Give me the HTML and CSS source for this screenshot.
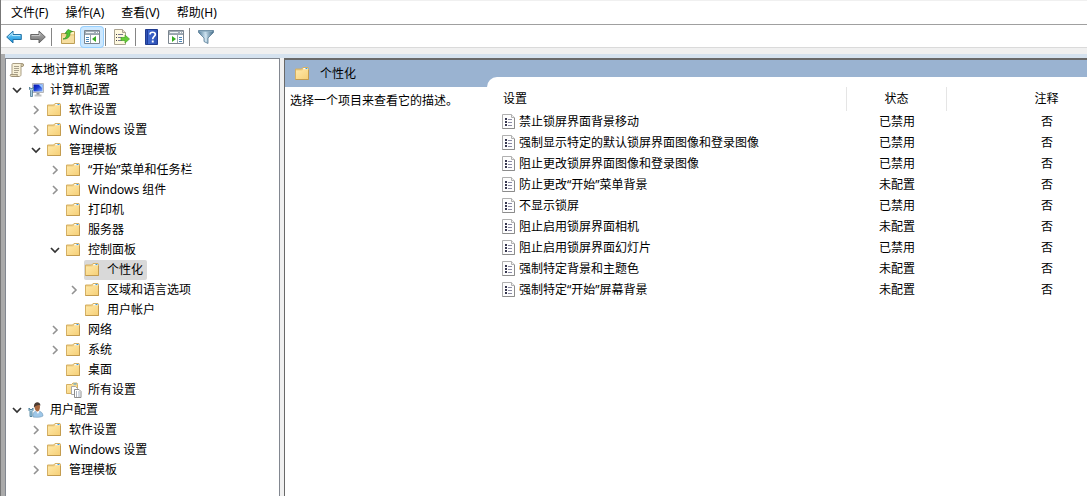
FILE: index.html
```html
<!DOCTYPE html>
<html lang="zh-CN">
<head>
<meta charset="utf-8">
<title>本地组策略编辑器</title>
<link rel="stylesheet" href="styles.css">
</head>
<body>
<svg class="sprite" aria-hidden="true">
  <defs>
    <linearGradient id="gFolder" x1="0" y1="0" x2="1" y2="1"><stop offset="0" stop-color="#ffe9aa"/><stop offset="1" stop-color="#f6d078"/></linearGradient>
    <linearGradient id="gBlue" x1="0" y1="0" x2="0" y2="1"><stop offset="0" stop-color="#8ad8fa"/><stop offset="1" stop-color="#0c8edb"/></linearGradient>
    <linearGradient id="gGray" x1="0" y1="0" x2="0" y2="1"><stop offset="0" stop-color="#b5b5b5"/><stop offset="1" stop-color="#707070"/></linearGradient>
    <linearGradient id="gHelp" x1="0" y1="0" x2="1" y2="0"><stop offset="0" stop-color="#2645a5"/><stop offset=".2" stop-color="#3f68cf"/><stop offset="1" stop-color="#2c4fb4"/></linearGradient>
    <linearGradient id="gFunnel" x1="0" y1="0" x2="1" y2="0"><stop offset="0" stop-color="#507a98"/><stop offset=".45" stop-color="#c9e0ee"/><stop offset="1" stop-color="#426a86"/></linearGradient>
    <linearGradient id="gScreen" x1="0" y1="0" x2="1" y2="1"><stop offset="0" stop-color="#0717a8"/><stop offset=".45" stop-color="#1636d4"/><stop offset="1" stop-color="#84b8ff"/></linearGradient>
  </defs>
  <symbol id="folder" viewBox="0 0 16 16">
    <path d="M.5 13.500v-10.500h6l1.500-1.500h5l.5 1.500v10.500z" fill="#efcd80" stroke="#d5b064"/>
    <path d="M8.500 2h4.500v1.500H8z" fill="#fff"/><path d="M10.500 2h2v1h-2z" fill="#3b9de0"/>
    <path d="M1 4.500h6l1.500-1H13V13H1z" fill="url(#gFolder)"/>
    <path d="M.5 13.500h13V4" fill="none" stroke="#c39c50"/>
  </symbol>
  <symbol id="folder-docs" viewBox="0 0 16 16">
    <path d="M.5 11.500v-9h5l1.500-1.500h4l.5 1.500v9z" fill="url(#gFolder)" stroke="#d5b064"/>
    <path d="M7.500 1.500h3v1h-3z" fill="#3b9de0"/>
    <path d="M5.500 4.500h4l2 2v6h-6z" fill="#fff" stroke="#a8a8a8"/>
    <path d="M8.500 7.500h4.500l2 2v6H8.500z" fill="#fff" stroke="#8d8d8d"/>
    <path d="M10 10h1M10 12h1M10 14h1" stroke="#33415f" stroke-width=".8"/><path d="M12 10h2M12 12h2M12 14h2" stroke="#8799b5" stroke-width=".8"/>
  </symbol>
  <symbol id="scroll" viewBox="0 0 16 16">
    <path d="M4 1.500h9.500c1.500 0 1.500 3 0 3H12v8c0 1.500-1 2-2 2H3V3c0-1 .3-1.500 1-1.500z" fill="#f8f1d8" stroke="#a99d83"/>
    <path d="M12 4.500V2.800c0-1 1.200-1.300 2-.5s.3 2.200-.7 2.200z" fill="#ded2b0" stroke="#92866d" stroke-width=".7"/>
    <path d="M1.500 12.500h7c-1 1 0 2 1 2H2.500c-1.500 0-1.500-1.500-1-2z" fill="#e8dcbb" stroke="#92866d" stroke-width=".8"/>
    <path d="M5 4.500h5M5 6.500h5M5 8.500h5M5 10.500h4" stroke="#a8a08b"/>
  </symbol>
  <symbol id="computer" viewBox="0 0 16 16">
    <path d="M4.500 1.500h11v9h-11z" fill="#e4e6e8" stroke="#b4b6b9"/>
    <path d="M5.500 2.500h9v7h-9z" fill="url(#gScreen)"/><path d="M10.500 2.500h4v4z" fill="#9acbff"/>
    <path d="M8.500 11h3v2h-3z" fill="#929aa2"/><path d="M6.500 13.500h7" stroke="#c0c2c4" stroke-width="2"/>
    <path d="M1.500 5v2.500l1 1v6h2v-6l1-1V5L4.500 6.500h-2z" fill="#a9cde2" stroke="#4d7892" stroke-width=".8"/>
  </symbol>
  <symbol id="user" viewBox="0 0 16 16">
    <path d="M5 15c-.5-4 1-6 4.500-6s5.500 2 5.500 5c-2 1.500-7 1.500-10 1z" fill="#9ec7e8" stroke="#7198b9" stroke-width=".6"/>
    <path d="M8 9l2 3 1.500-3z" fill="#fff"/>
    <path d="M6.500 4.500c0-4 5.500-4 5.500 0 0 2.500-.8 5-2.500 5s-3-2.500-3-5z" fill="#a8683f"/>
    <path d="M6 5.500c-1-6 6-7 6.500-2L10.500 3 7.500 4z" fill="#4a3b32"/>
    <path d="M1 6v2.500l1 1v5h2v-5l1-1V6L4 7.500H2z" fill="#a9cde2" stroke="#39718f" stroke-width=".8"/>
  </symbol>
  <symbol id="policy" viewBox="0 0 14 16">
    <path d="M.5.500h9l3 3v11H.5z" fill="#fdfdfd" stroke="#b0b0b0"/><path d="M9.500.500v3h3" fill="#eee" stroke="#b0b0b0"/>
    <path d="M.5 14.500h12V4" fill="none" stroke="#8c8c8c"/>
    <path d="M3 4h2v2H3zM3 7h2v2H3zM3 10h2v2H3z" fill="#37374f"/>
    <path d="M6 5.500h4M6 8.500h4M6 11.500h4" stroke="#8b8ba5"/>
  </symbol>
  <symbol id="chev-right" viewBox="0 0 16 16"><path d="M6 4l4 4-4 4" fill="none" stroke="#929292" stroke-width="1.600"/></symbol>
  <symbol id="chev-down" viewBox="0 0 16 16"><path d="M4 6l4 4 4-4" fill="none" stroke="#333" stroke-width="1.700"/></symbol>
  <symbol id="back" viewBox="0 0 16 16"><path d="M.7 8L7 2v3.500h8.300v5H7V14z" fill="url(#gBlue)" stroke="#2473a6"/><path d="M2.500 7.700L6.200 4.200v2.300h8" fill="none" stroke="#b4e8fd"/></symbol>
  <symbol id="forward" viewBox="0 0 16 16"><path d="M15.300 8L9 2v3.500H.7v5H9V14z" fill="url(#gGray)" stroke="#686868"/><path d="M1.700 6.500h8V4.200" fill="none" stroke="#c9c9c9"/></symbol>
  <symbol id="up" viewBox="0 0 16 16">
    <path d="M1.500 4.500h5l1-2h7v12h-13z" fill="#efd58d" stroke="#bd9f56"/><path d="M10 3h4v2h-4z" fill="#fff3c5"/><path d="M2 7h12v7H2z" fill="#f6dea0"/>
    <path d="M3 10c2.500-.5 4-2.500 4-6L5 4.500 8 .5l4.500 2L10 3.500C10.500 7.500 7.500 10.500 3 10z" fill="#4fc631" stroke="#348d24" stroke-width=".7"/>
  </symbol>
  <symbol id="tree-pane" viewBox="0 0 16 16">
    <path d="M.5 1.500h15v13H.5z" fill="#fff" stroke="#7b858f"/><path d="M1 2h14v3H1z" fill="#a1acb6"/>
    <path d="M2 3.500h8" stroke="#eef2f5"/><path d="M12 3.500h1M14 3.500h1" stroke="#fff"/>
    <path d="M1 5.500h14M6.500 6v8" stroke="#98a3ad"/><path d="M2 8.500h3M2 10.500h3M2 12.500h3" stroke="#4a86b9"/><path d="M12 7v6L8 10z" fill="#35aa20"/>
  </symbol>
  <symbol id="action-pane" viewBox="0 0 16 16">
    <path d="M.5 1.500h15v13H.5z" fill="#fff" stroke="#7b858f"/><path d="M1 2h14v3H1z" fill="#a1acb6"/>
    <path d="M2 3.500h8" stroke="#eef2f5"/><path d="M12 3.500h1M14 3.500h1" stroke="#fff"/>
    <path d="M1 5.500h14M9.500 6v8" stroke="#98a3ad"/><path d="M11 8.500h3M11 10.500h3M11 12.500h3" stroke="#4a86b9"/><path d="M4 7v6l4-3z" fill="#35aa20"/>
  </symbol>
  <symbol id="export" viewBox="0 0 16 16">
    <path d="M.5.500h8l3 3v12H.5z" fill="#fff9df" stroke="#aaa391"/><path d="M8.500.500v3h3" fill="#e9e0c5" stroke="#aaa391"/>
    <path d="M2 5.500h1M2 8.500h1M2 11.500h1" stroke="#444"/><path d="M4 5.500h5M4 8.500h4M4 11.500h4" stroke="#777690"/>
    <path d="M7 8.500h4V6l4.500 4L11 14v-2.500H7z" fill="#67cc39" stroke="#45a527" stroke-width=".7"/>
  </symbol>
  <symbol id="help" viewBox="0 0 16 16">
    <path d="M1.500.500h12v15h-12z" fill="url(#gHelp)" stroke="#203b8e"/><path d="M3.500 1v14" stroke="#1e3d9b"/>
    <path d="M6 5.500C6 2.500 11.300 2.500 11.300 5.500c0 2-2.600 2-2.600 4.800" fill="none" stroke="#fff" stroke-width="1.700"/><path d="M7.800 11.500h1.900v2H7.800z" fill="#fff"/>
  </symbol>
  <symbol id="filter" viewBox="0 0 16 16">
    <path d="M.5 1.500h15v2L10 9v5.500L6 12.500V9L.5 3.500z" fill="url(#gFunnel)" stroke="#587c96" stroke-width=".8"/>
    <path d="M1.500 2.300h13" stroke="#8fb0c4"/><path d="M8 5v7.500" stroke="#d4e6f0"/>
  </symbol>
</svg>

<div class="window">
  <nav class="menubar" aria-label="菜单">
    <button>文件(F)</button><button>操作(A)</button><button>查看(V)</button><button>帮助(H)</button>
  </nav>
  <div class="toolbar" role="toolbar" aria-label="工具栏">
    <button aria-label="后退"><svg class="icon"><use href="#back"/></svg></button>
    <button aria-label="前进"><svg class="icon"><use href="#forward"/></svg></button>
    <span class="sep"></span>
    <button aria-label="上一级"><svg class="icon"><use href="#up"/></svg></button>
    <button class="pressed" aria-pressed="true" aria-label="显示控制台树"><svg class="icon"><use href="#tree-pane"/></svg></button>
    <span class="sep"></span>
    <button aria-label="导出列表"><svg class="icon"><use href="#export"/></svg></button>
    <span class="sep"></span>
    <button aria-label="帮助"><svg class="icon"><use href="#help"/></svg></button>
    <button aria-label="显示操作窗格"><svg class="icon"><use href="#action-pane"/></svg></button>
    <span class="sep"></span>
    <button aria-label="筛选器"><svg class="icon"><use href="#filter"/></svg></button>
  </div>

  <div class="workspace">
    <aside class="tree">
      <div class="row"><button class="label"><svg class="icon"><use href="#scroll"/></svg>本地计算机 策略</button></div>
      <ul>
        <li>
          <div class="row"><button class="expander" aria-label="折叠"><svg class="icon"><use href="#chev-down"/></svg></button><button class="label"><svg class="icon"><use href="#computer"/></svg>计算机配置</button></div>
          <ul>
            <li class="row"><button class="expander" aria-label="展开"><svg class="icon"><use href="#chev-right"/></svg></button><button class="label"><svg class="icon"><use href="#folder"/></svg>软件设置</button></li>
            <li class="row"><button class="expander" aria-label="展开"><svg class="icon"><use href="#chev-right"/></svg></button><button class="label"><svg class="icon"><use href="#folder"/></svg>Windows 设置</button></li>
            <li>
              <div class="row"><button class="expander" aria-label="折叠"><svg class="icon"><use href="#chev-down"/></svg></button><button class="label"><svg class="icon"><use href="#folder"/></svg>管理模板</button></div>
              <ul>
                <li class="row"><button class="expander" aria-label="展开"><svg class="icon"><use href="#chev-right"/></svg></button><button class="label"><svg class="icon"><use href="#folder"/></svg>“开始”菜单和任务栏</button></li>
                <li class="row"><button class="expander" aria-label="展开"><svg class="icon"><use href="#chev-right"/></svg></button><button class="label"><svg class="icon"><use href="#folder"/></svg>Windows 组件</button></li>
                <li class="row leaf"><button class="label"><svg class="icon"><use href="#folder"/></svg>打印机</button></li>
                <li class="row leaf"><button class="label"><svg class="icon"><use href="#folder"/></svg>服务器</button></li>
                <li>
                  <div class="row"><button class="expander" aria-label="折叠"><svg class="icon"><use href="#chev-down"/></svg></button><button class="label"><svg class="icon"><use href="#folder"/></svg>控制面板</button></div>
                  <ul>
                    <li class="row leaf"><button class="label selected"><svg class="icon"><use href="#folder"/></svg>个性化</button></li>
                    <li class="row"><button class="expander" aria-label="展开"><svg class="icon"><use href="#chev-right"/></svg></button><button class="label"><svg class="icon"><use href="#folder"/></svg>区域和语言选项</button></li>
                    <li class="row leaf"><button class="label"><svg class="icon"><use href="#folder"/></svg>用户帐户</button></li>
                  </ul>
                </li>
                <li class="row"><button class="expander" aria-label="展开"><svg class="icon"><use href="#chev-right"/></svg></button><button class="label"><svg class="icon"><use href="#folder"/></svg>网络</button></li>
                <li class="row"><button class="expander" aria-label="展开"><svg class="icon"><use href="#chev-right"/></svg></button><button class="label"><svg class="icon"><use href="#folder"/></svg>系统</button></li>
                <li class="row leaf"><button class="label"><svg class="icon"><use href="#folder"/></svg>桌面</button></li>
                <li class="row leaf"><button class="label"><svg class="icon"><use href="#folder-docs"/></svg>所有设置</button></li>
              </ul>
            </li>
          </ul>
        </li>
        <li>
          <div class="row"><button class="expander" aria-label="折叠"><svg class="icon"><use href="#chev-down"/></svg></button><button class="label"><svg class="icon"><use href="#user"/></svg>用户配置</button></div>
          <ul>
            <li class="row"><button class="expander" aria-label="展开"><svg class="icon"><use href="#chev-right"/></svg></button><button class="label"><svg class="icon"><use href="#folder"/></svg>软件设置</button></li>
            <li class="row"><button class="expander" aria-label="展开"><svg class="icon"><use href="#chev-right"/></svg></button><button class="label"><svg class="icon"><use href="#folder"/></svg>Windows 设置</button></li>
            <li class="row"><button class="expander" aria-label="展开"><svg class="icon"><use href="#chev-right"/></svg></button><button class="label"><svg class="icon"><use href="#folder"/></svg>管理模板</button></li>
          </ul>
        </li>
      </ul>
    </aside>

    <main class="content">
      <section class="summary">
        <h1><svg class="icon"><use href="#folder"/></svg>个性化</h1>
        <p>选择一个项目来查看它的描述。</p>
      </section>
      <section class="list">
        <table>
          <colgroup><col class="col-name"><col class="col-state"><col class="col-note"></colgroup>
          <thead><tr><th>设置</th><th>状态</th><th>注释</th></tr></thead>
          <tbody>
            <tr><td><span class="policy"><svg><use href="#policy"/></svg>禁止锁屏界面背景移动</span></td><td>已禁用</td><td>否</td></tr>
            <tr><td><span class="policy"><svg><use href="#policy"/></svg>强制显示特定的默认锁屏界面图像和登录图像</span></td><td>已禁用</td><td>否</td></tr>
            <tr><td><span class="policy"><svg><use href="#policy"/></svg>阻止更改锁屏界面图像和登录图像</span></td><td>已禁用</td><td>否</td></tr>
            <tr><td><span class="policy"><svg><use href="#policy"/></svg>防止更改“开始”菜单背景</span></td><td>未配置</td><td>否</td></tr>
            <tr><td><span class="policy"><svg><use href="#policy"/></svg>不显示锁屏</span></td><td>已禁用</td><td>否</td></tr>
            <tr><td><span class="policy"><svg><use href="#policy"/></svg>阻止启用锁屏界面相机</span></td><td>未配置</td><td>否</td></tr>
            <tr><td><span class="policy"><svg><use href="#policy"/></svg>阻止启用锁屏界面幻灯片</span></td><td>已禁用</td><td>否</td></tr>
            <tr><td><span class="policy"><svg><use href="#policy"/></svg>强制特定背景和主题色</span></td><td>未配置</td><td>否</td></tr>
            <tr><td><span class="policy"><svg><use href="#policy"/></svg>强制特定“开始”屏幕背景</span></td><td>未配置</td><td>否</td></tr>
          </tbody>
        </table>
      </section>
    </main>
  </div>
</div>
</body>
</html>
```
FILE: styles.css
```css
* { box-sizing: border-box; }

body {
  margin: 0;
  background: #fff;
  color: #000;
  font: 12px/20px "Noto Sans", "Noto Sans CJK SC", sans-serif;
}

button {
  margin: 0;
  padding: 0;
  border: 0;
  background: none;
  color: inherit;
  font: inherit;
  white-space: nowrap;
}

ul { margin: 0; padding: 0; list-style: none; }

.sprite { position: absolute; width: 0; height: 0; }
.icon { display: block; flex: none; width: 16px; height: 16px; }

.window {
  display: flex;
  flex-direction: column;
  min-height: 100vh;
  border-left: 1px solid #777;
}

.menubar {
  display: flex;
  gap: 1px;
  height: 25px;
  padding: 1px 0 0 2px;
  border-top: 1px solid #f0f0f0;
  border-bottom: 1px solid #a0a0a0;
}
.menubar button { padding: 0 8px; }

.toolbar {
  display: flex;
  align-items: center;
  gap: 2px;
  height: 23px;
  padding: 1px 0 0 2px;
  border-bottom: 1px solid #dadada;
}
.toolbar button {
  display: grid;
  place-items: center;
  width: 22px;
  height: 20px;
  border-radius: 3px;
}
.toolbar .pressed { box-shadow: 0 0 0 1px #99d1ff; background: #cce8ff; }
.sep { width: 1px; height: 18px; margin-right: 3px; background: #858585; }

.workspace {
  display: flex;
  flex: 1;
  border-top: 6px solid #f0f0f0;
  background: linear-gradient(#d5e2ef 4px, #f0f0f0 4px);
}
.workspace::before {
  content: "";
  flex: none;
  width: 4px;
  background: #aaa;
}

.tree {
  flex: none;
  width: 275px;
  margin-top: 4px;
  padding: 1px 0 0 2px;
  border: solid #828790;
  border-width: 1px 1px 0 1px;
  background: #fff;
}
.tree ul ul { padding-left: 19px; }
.row { display: flex; align-items: center; height: 20px; }
.expander { width: 16px; margin: 0 2px 0 1px; }
.leaf { padding-left: 19px; }
.label {
  display: flex;
  align-items: center;
  gap: 6px;
  height: 20px;
  padding: 0 4px 0 1px;
  border-radius: 2px;
}
.selected { background: #d9d9d9; }

.content {
  display: flex;
  flex: 1;
  min-width: 0;
  margin: 4px 0 0 4px;
  border: solid #696969;
  border-width: 2px 0 0 1px;
  background: linear-gradient(#9ab3d1 27px, #fff 27px);
}

.summary { flex: none; width: 202px; }
.summary h1 {
  display: flex;
  align-items: center;
  gap: 9px;
  height: 27px;
  margin: 0;
  padding-left: 10px;
  font-size: 12px;
  font-weight: 400;
}
.summary p { margin: 0; padding: 4px 5px; white-space: nowrap; }

.list {
  flex: 1;
  min-width: 0;
  margin-top: 17px;
  padding: 10px 0 0 12px;
  overflow: hidden;
  border-top-left-radius: 10px;
  background: #fff;
}
table { width: 648px; table-layout: fixed; border-collapse: separate; border-spacing: 0; }
.col-name { width: 348px; }
.col-state { width: 100px; }
.col-note { width: 200px; }
th, td { height: 21px; padding: 0; font-weight: 400; text-align: center; white-space: nowrap; }
th { height: 24px; border-right: 1px solid #e5e5e5; }
th:first-child { padding-left: 4px; text-align: left; }
td:first-child { padding-left: 3px; text-align: left; }
.policy { display: flex; align-items: center; gap: 3px; }
.policy svg { display: block; flex: none; width: 14px; height: 16px; }
```
